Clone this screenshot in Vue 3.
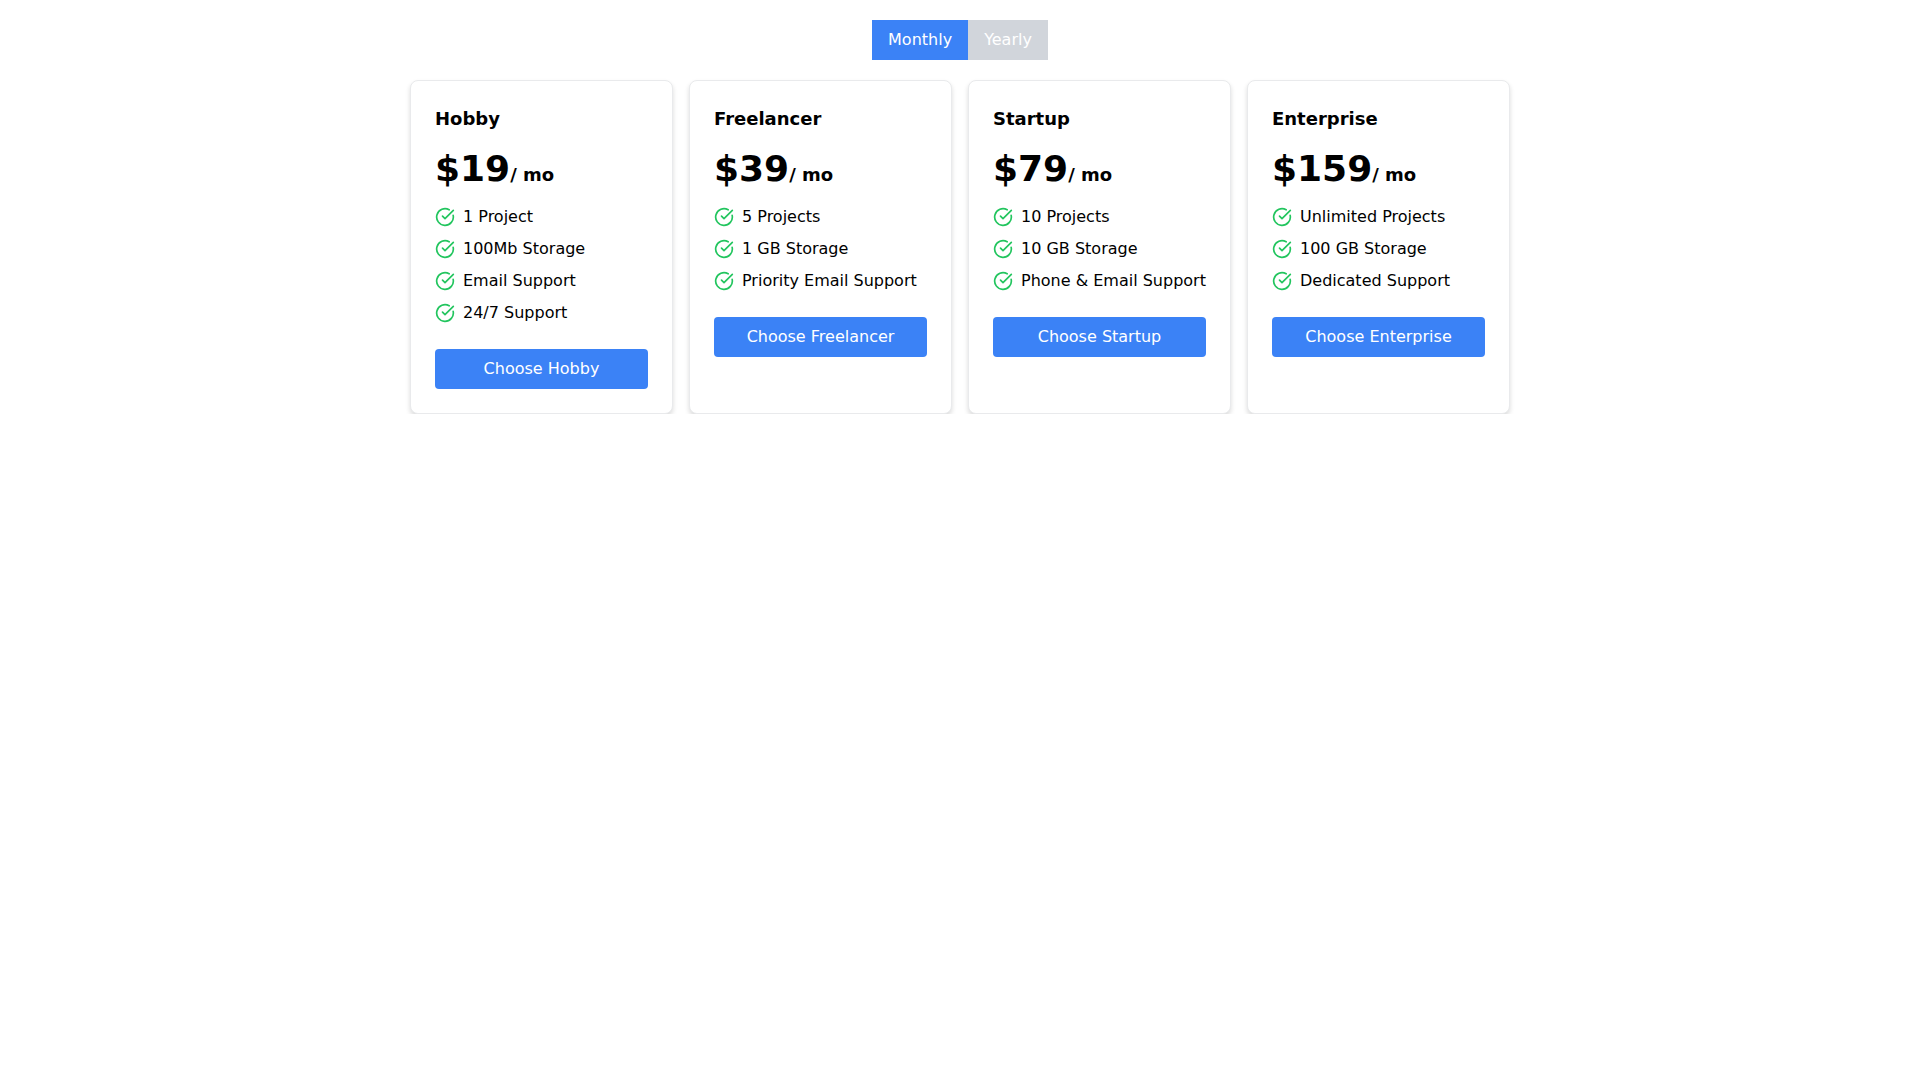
<script setup>
const plans = [
  { name: 'Hobby', price: '$19', features: ['1 Project', '100Mb Storage', 'Email Support', '24/7 Support'] },
  { name: 'Freelancer', price: '$39', features: ['5 Projects', '1 GB Storage', 'Priority Email Support'] },
  { name: 'Startup', price: '$79', features: ['10 Projects', '10 GB Storage', 'Phone & Email Support'] },
  { name: 'Enterprise', price: '$159', features: ['Unlimited Projects', '100 GB Storage', 'Dedicated Support'] },
]
</script>

<template>
  <div class="page">
    <div class="toggle">
      <button class="tog active">Monthly</button>
      <button class="tog">Yearly</button>
    </div>
    <div class="plans">
      <div v-for="plan in plans" :key="plan.name" class="card">
        <h2 class="name">{{ plan.name }}</h2>
        <div class="price">
          <span class="amount">{{ plan.price }}</span><span class="per">/ mo</span>
        </div>
        <ul class="features">
          <li v-for="f in plan.features" :key="f">
            <svg class="check" viewBox="0 0 24 24" fill="none" stroke="currentColor" stroke-width="2" stroke-linecap="round" stroke-linejoin="round">
              <path d="M21.801 10A10 10 0 1 1 17 3.335" />
              <path d="m9 11 3 3L22 4" />
            </svg>
            <span>{{ f }}</span>
          </li>
        </ul>
        <button class="choose">Choose {{ plan.name }}</button>
      </div>
    </div>
  </div>
</template>

<style scoped>
.page {
  display: flex;
  flex-direction: column;
  align-items: center;
  padding-top: 20px;
  font-family: "DejaVu Sans", sans-serif;
  color: #000;
}

.toggle {
  display: flex;
  margin-bottom: 20px;
}

.tog {
  padding: 8px 16px;
  border: none;
  background: #d1d5db;
  color: #fff;
  font-family: inherit;
  font-size: 16px;
  line-height: 24px;
}

.tog.active {
  background: #3b82f6;
}

.plans {
  display: grid;
  grid-template-columns: repeat(4, 263px);
  gap: 16px;
}

.card {
  display: flex;
  flex-direction: column;
  align-items: stretch;
  padding: 24px;
  border: 1px solid #e9eaec;
  border-radius: 8px;
  background: #fff;
  box-shadow: 0 3px 5px rgba(0, 0, 0, 0.14);
}

.name {
  margin: 0 0 16px;
  font-size: 18px;
  line-height: 28px;
  font-weight: 700;
}

.price {
  margin-bottom: 8.5px;
  line-height: 40px;
}

.amount {
  font-size: 36px;
  font-weight: 700;
}

.per {
  font-size: 18px;
  font-weight: 700;
}

.features {
  margin: 0 0 24px;
  padding: 0;
  list-style: none;
}

.features li {
  display: flex;
  align-items: center;
  gap: 8px;
  margin-bottom: 8px;
  font-size: 16px;
  line-height: 24px;
}

.features li:last-child {
  margin-bottom: 0;
}

.check {
  width: 20px;
  height: 20px;
  color: #22c55e;
  flex-shrink: 0;
}

.choose {
  padding: 8px 16px;
  border: none;
  border-radius: 4px;
  background: #3b82f6;
  color: #fff;
  font-family: inherit;
  font-size: 16px;
  line-height: 24px;
}
</style>
